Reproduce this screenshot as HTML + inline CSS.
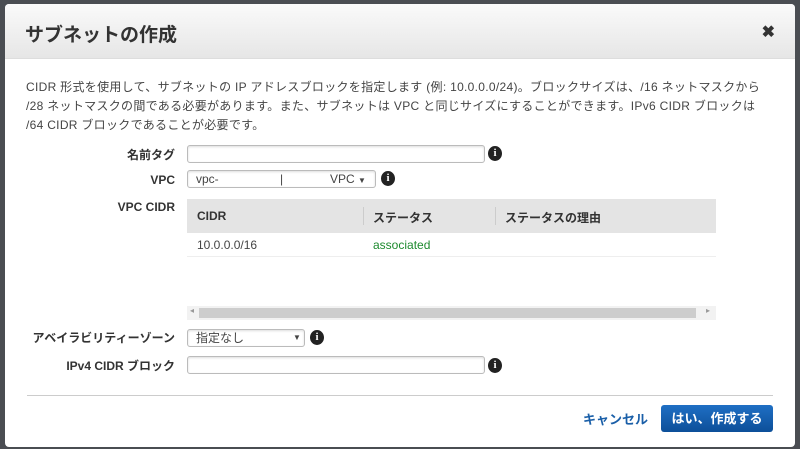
<!DOCTYPE html>
<html><head><meta charset="utf-8"><style>
*{box-sizing:border-box;margin:0;padding:0}
body{width:800px;height:449px;background:#4a4d52;font-family:"Liberation Sans","Noto Sans CJK JP",sans-serif;position:relative;overflow:hidden;color:#333}
.dlg{position:absolute;left:5px;top:4px;width:790px;height:443px;background:#fff;border-radius:4px;overflow:hidden}
.hd{position:absolute;left:0;top:0;width:100%;height:55px;background:linear-gradient(#fafafa,#e6e6e6);border-bottom:1px solid #ddd}
.hd h1{position:absolute;left:20px;top:16px;font-size:19px;font-weight:bold;color:#333}
.x{position:absolute;right:20px;top:18px;font-size:16px;font-weight:bold;color:#333}
.a{position:absolute}
.desc{left:21px;top:74px;width:780px;font-size:12px;line-height:19px;color:#444;letter-spacing:0.3px;white-space:nowrap}
.lbl{font-size:12px;font-weight:bold;color:#333;text-align:right;width:170px}
.inp{border:1px solid #bbb;border-radius:3px;background:#fff;box-shadow:inset 0 1px 2px #ddd}
.info{width:14px;height:15px;border-radius:50%;background:#222;color:#fff;font-size:11px;font-weight:bold;text-align:center;line-height:15px;font-family:"Liberation Serif",serif}
.sel{font-size:12px;color:#444;padding-left:8px;line-height:16px}
.th{background:#e4e4e4;font-size:12px;font-weight:bold;color:#333}
</style></head><body>
<div class="dlg">
<div class="hd"><h1>サブネットの作成</h1><div class="x">✖</div></div>
<div class="a desc">CIDR 形式を使用して、サブネットの IP アドレスブロックを指定します (例: 10.0.0.0/24)。ブロックサイズは、/16 ネットマスクから<br>/28 ネットマスクの間である必要があります。また、サブネットは VPC と同じサイズにすることができます。IPv6 CIDR ブロックは<br>/64 CIDR ブロックであることが必要です。</div>

<div class="a lbl" style="left:0;top:142px">名前タグ</div>
<div class="a inp" style="left:182px;top:141px;width:298px;height:18px"></div>
<div class="a info" style="left:483px;top:142px">i</div>

<div class="a lbl" style="left:0;top:169px">VPC</div>
<div class="a inp sel" style="left:182px;top:166px;width:189px;height:18px">vpc-<span style="position:absolute;left:92px">|</span><span style="position:absolute;left:142px">VPC <span style="font-size:8px">▼</span></span></div>
<div class="a info" style="left:376px;top:167px">i</div>

<div class="a lbl" style="left:0;top:196px">VPC CIDR</div>
<div class="a th" style="left:182px;top:195px;width:529px;height:34px">
<span class="a" style="left:10px;top:10px">CIDR</span>
<span class="a" style="left:176px;top:8px;height:18px;border-left:1px solid #ccc"></span>
<span class="a" style="left:186px;top:10px">ステータス</span>
<span class="a" style="left:308px;top:8px;height:18px;border-left:1px solid #ccc"></span>
<span class="a" style="left:318px;top:10px">ステータスの理由</span>
</div>
<div class="a" style="left:182px;top:229px;width:529px;height:24px;border-bottom:1px solid #eee;font-size:12px">
<span class="a" style="left:10px;top:5px;color:#444">10.0.0.0/16</span>
<span class="a" style="left:186px;top:5px;color:#1d8a2e">associated</span>
</div>
<div class="a" style="left:182px;top:302px;width:529px;height:14px;background:#f2f2f2"></div>
<div class="a" style="left:194px;top:304px;width:497px;height:10px;background:#cdcdcd"></div>
<div class="a" style="left:185px;top:302px;font-size:8px;color:#999">◂</div>
<div class="a" style="left:701px;top:302px;font-size:8px;color:#999">▸</div>

<div class="a lbl" style="left:0;top:325px">アベイラビリティーゾーン</div>
<div class="a inp sel" style="left:182px;top:325px;width:118px;height:18px">指定なし<span style="position:absolute;left:105px;font-size:8px">▼</span></div>
<div class="a info" style="left:305px;top:326px">i</div>

<div class="a lbl" style="left:0;top:353px">IPv4 CIDR ブロック</div>
<div class="a inp" style="left:182px;top:352px;width:298px;height:18px"></div>
<div class="a info" style="left:483px;top:354px">i</div>

<div class="a" style="left:22px;top:391px;width:746px;border-top:1px solid #ccc"></div>
<div class="a" style="left:578px;top:405px;font-size:13px;font-weight:bold;color:#1a5fa8">キャンセル</div>
<div class="a" style="left:656px;top:401px;width:112px;height:27px;background:linear-gradient(#1f6fc4,#0d4f99);border-radius:3px;color:#fff;font-size:13px;font-weight:bold;text-align:center;line-height:27px">はい、作成する</div>
</div>
</body></html>
